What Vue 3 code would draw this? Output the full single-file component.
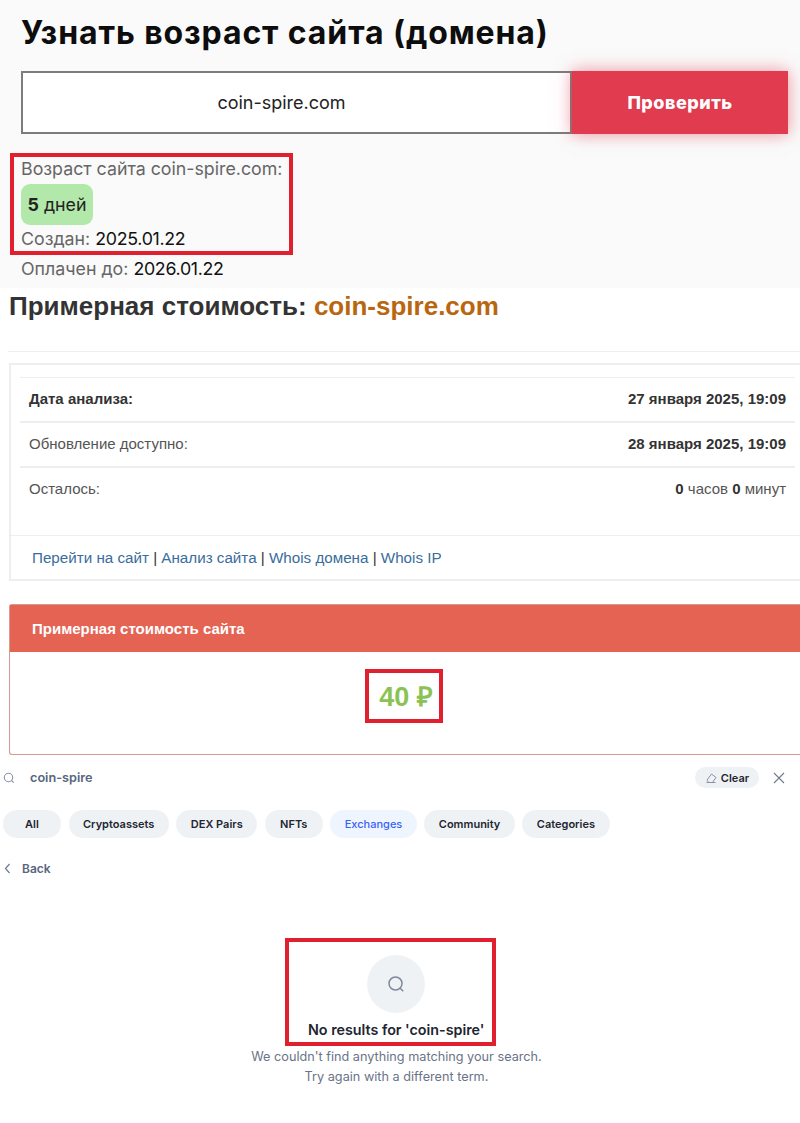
<template>
  <div class="page">
    <section class="age">
      <h1>Узнать возраст сайта (домена)</h1>
      <div class="checker">
        <div class="domain">coin-spire.com</div>
        <button class="checkBtn">Проверить</button>
      </div>
      <div class="mark ageMark">
        <div class="line">Возраст сайта coin-spire.com:</div>
        <span class="badge"><b>5</b> дней</span>
        <div class="line">Создан: <span class="dark">2025.01.22</span></div>
      </div>
      <div class="line paid">Оплачен до: <span class="dark">2026.01.22</span></div>
    </section>

    <section class="cost">
      <h2>Примерная стоимость: <span class="orange">coin-spire.com</span></h2>
      <hr />
      <div class="infoBox">
        <div class="rows">
          <div v-for="row in rows" :key="row.label" class="row">
            <span :class="{ strong: row.strongLabel }">{{ row.label }}</span>
            <span class="rowValue" v-html="row.value"></span>
          </div>
        </div>
        <div class="links">
          <a>Перейти на сайт</a> | <a>Анализ сайта</a> | <a>Whois домена</a> | <a>Whois IP</a>
        </div>
      </div>
      <div class="priceCard">
        <div class="priceHead">Примерная стоимость сайта</div>
        <div class="priceBody">
          <div class="mark priceMark">40 ₽</div>
        </div>
      </div>
    </section>

    <section class="search">
      <div class="searchBar">
        <svg class="searchIcon" width="12" height="12" viewBox="0 0 12 12" fill="none" stroke="#8a93a6" stroke-width="1.1">
          <circle cx="5.5" cy="5.5" r="4.2" />
          <path d="M8.5 8.5l2.2 2.2" />
        </svg>
        <span class="query">coin-spire</span>
        <span class="clear">
          <svg width="13" height="12" viewBox="0 0 13 12" fill="none" stroke="#8a93a6" stroke-width="1">
            <path d="M1.5 10.5h9M2 8.2L6.5 2l4.5 3.5-3.6 5H3.8z" />
          </svg>
          Clear
        </span>
        <svg class="closeIcon" width="12" height="12" viewBox="0 0 12 12" stroke="#6f7a8f" stroke-width="1.1">
          <path d="M1 1l10 10M11 1L1 11" />
        </svg>
      </div>
      <div class="tabs">
        <span v-for="tab in tabs" :key="tab" class="tab" :class="{ active: tab == 'Exchanges' }">{{ tab }}</span>
      </div>
      <div class="back">
        <svg width="7" height="11" viewBox="0 0 7 11" fill="none" stroke="#6f7a8f" stroke-width="1.2">
          <path d="M5.5 1L1.5 5.5l4 4.5" />
        </svg>
        <span>Back</span>
      </div>
      <div class="empty">
        <div class="mark emptyMark">
          <div class="circle">
            <svg width="18" height="18" viewBox="0 0 18 18" fill="none" stroke="#7f899c" stroke-width="1.5">
              <circle cx="8.5" cy="8.5" r="6.5" />
              <path d="M13.2 13.2l3 3" />
            </svg>
          </div>
          <div class="emptyTitle">No results for 'coin-spire'</div>
        </div>
        <p>We couldn't find anything matching your search.<br />Try again with a different term.</p>
      </div>
    </section>
  </div>
</template>

<script setup>
const rows = [
  { label: 'Дата анализа:', value: '<b>27 января 2025, 19:09</b>', strongLabel: true },
  { label: 'Обновление доступно:', value: '<b>28 января 2025, 19:09</b>' },
  { label: 'Осталось:', value: '<b>0</b> часов <b>0</b> минут' }
]

const tabs = ['All', 'Cryptoassets', 'DEX Pairs', 'NFTs', 'Exchanges', 'Community', 'Categories']
</script>

<style scoped>
.page {
  width: 800px;
  height: 1123px;
  overflow: hidden;
  background: #fff;
}

.mark {
  border: 4px solid #e0202f;
}

/* top block */
.age {
  height: 288px;
  box-sizing: border-box;
  padding: 14px 0 0 21px;
  background: #fafafa;
  font-family: Inter, "Noto Sans", sans-serif;
}
h1 {
  margin: 0;
  font-size: 32px;
  line-height: 38px;
  font-weight: 700;
  letter-spacing: 0.9px;
  color: #0d0d0d;
}
.checker {
  display: flex;
  margin-top: 19px;
  width: 767px;
  height: 63px;
}
.domain {
  width: 551px;
  box-sizing: border-box;
  padding-right: 30px;
  border: 2px solid #7c7c7c;
  background: #fff;
  text-align: center;
  line-height: 59px;
  font-size: 18px;
  color: #222;
}
.checkBtn {
  width: 216px;
  border: none;
  background: #e03b4e;
  color: #fff;
  font-family: inherit;
  font-size: 18px;
  font-weight: 800;
  letter-spacing: 0.5px;
  box-shadow: 0 0 16px rgba(224, 59, 78, 0.55);
}
.ageMark {
  width: 283px;
  height: 102px;
  box-sizing: border-box;
  margin: 19px 0 0 -11px;
  padding: 0 0 0 7px;
}
.line {
  font-size: 17.8px;
  line-height: 22px;
  color: #666;
}
.ageMark .line:first-child {
  padding-top: 1px;
}
.dark {
  color: #111;
  letter-spacing: -0.3px;
}
.badge {
  display: block;
  width: 72px;
  height: 41px;
  margin: 4px 0 3px;
  border-radius: 9px;
  background: #b2e8a9;
  color: #222;
  font-size: 17.8px;
  line-height: 41px;
  text-align: center;
}
.paid {
  margin-top: 3px;
}

/* cost block */
.cost {
  height: 472px;
  box-sizing: border-box;
  padding: 3px 0 0 9px;
  font-family: "Liberation Sans", Arial, sans-serif;
}
h2 {
  margin: 0;
  font-size: 26px;
  line-height: 30px;
  font-weight: 700;
  color: #333;
}
.orange {
  color: #b9660f;
}
hr {
  margin: 30px 0 11px -1px;
  border: none;
  border-top: 1px solid #eee;
}
.infoBox {
  box-sizing: border-box;
  height: 218px;
  border: 2px solid #eee;
  border-right: none;
}
.rows {
  height: 158px;
  box-sizing: border-box;
  margin: 12px 5px 0 9px;
  border-top: 1px solid #eee;
}
.row {
  display: flex;
  justify-content: space-between;
  box-sizing: border-box;
  height: 45px;
  padding: 0 9px 0 9px;
  border-bottom: 2px solid #eee;
  font-size: 15px;
  line-height: 42px;
  color: #555;
}
.row:last-child {
  border-bottom: none;
}
.strong {
  font-weight: 700;
  color: #333;
}
.rowValue {
  color: #555;
}
.rowValue :deep(b) {
  color: #333;
}
.links {
  box-sizing: border-box;
  border-top: 1px solid #eee;
  padding-left: 21px;
  font-size: 15.2px;
  line-height: 44px;
  color: #333;
}
.links a {
  color: #3a6d9c;
}
.priceCard {
  box-sizing: border-box;
  height: 151px;
  margin-top: 23px;
  border: 1px solid #d59a90;
  border-right: none;
  border-radius: 3px 0 0 3px;
}
.priceHead {
  height: 47px;
  padding-left: 22px;
  background: #e56353;
  color: #fff;
  font-size: 15px;
  font-weight: 700;
  line-height: 47px;
}
.priceBody {
  padding: 17px 0 0 355px;
}
.priceMark {
  box-sizing: border-box;
  width: 78px;
  height: 54px;
  padding-left: 4px;
  color: #8bc254;
  font-size: 27px;
  font-weight: 700;
  line-height: 48px;
  text-align: center;
}

/* search block */
.search {
  font-family: Inter, "Noto Sans", sans-serif;
}
.searchBar {
  display: flex;
  align-items: center;
  height: 21px;
  margin-top: 7px;
  padding: 0 15px 0 3px;
}
.searchIcon {
  flex: none;
}
.query {
  margin-left: 15px;
  font-size: 12.7px;
  font-weight: 600;
  color: #58667e;
}
.clear {
  display: flex;
  align-items: center;
  justify-content: center;
  gap: 3px;
  width: 64px;
  height: 21px;
  margin-left: auto;
  border-radius: 11px;
  background: #eff2f5;
  color: #222531;
  font-size: 11px;
  font-weight: 600;
}
.closeIcon {
  margin-left: 14px;
}
.tabs {
  display: flex;
  gap: 7.5px;
  margin: 22px 0 0 3px;
}
.tab {
  min-width: 58px;
  box-sizing: border-box;
  height: 28px;
  padding: 0 14.5px;
  border-radius: 14px;
  background: #eff2f5;
  color: #222531;
  font-size: 11px;
  font-weight: 600;
  line-height: 28px;
  text-align: center;
}
.tab.active {
  background: #eff5ff;
  color: #3861fb;
  font-weight: 500;
}
.back {
  display: flex;
  align-items: center;
  gap: 11px;
  margin: 22px 0 0 4px;
  height: 16px;
  color: #58667e;
  font-size: 12px;
  font-weight: 600;
}
.empty {
  display: flex;
  flex-direction: column;
  align-items: center;
  margin-top: 62px;
  padding-right: 7px;
}
.emptyMark {
  box-sizing: border-box;
  width: 211px;
  height: 108px;
  margin-left: -12px;
  padding: 13px 0 0 11px;
}
.circle {
  display: flex;
  align-items: center;
  justify-content: center;
  width: 58px;
  height: 58px;
  margin: 0 auto;
  border-radius: 50%;
  background: #eff2f5;
}
.emptyTitle {
  margin-top: 8px;
  padding-left: 8px;
  color: #222531;
  font-size: 14.3px;
  font-weight: 600;
  line-height: 18px;
  white-space: nowrap;
}
.empty p {
  margin: 1px 0 0;
  color: #6a7488;
  font-size: 12.7px;
  line-height: 20px;
  text-align: center;
}
</style>
